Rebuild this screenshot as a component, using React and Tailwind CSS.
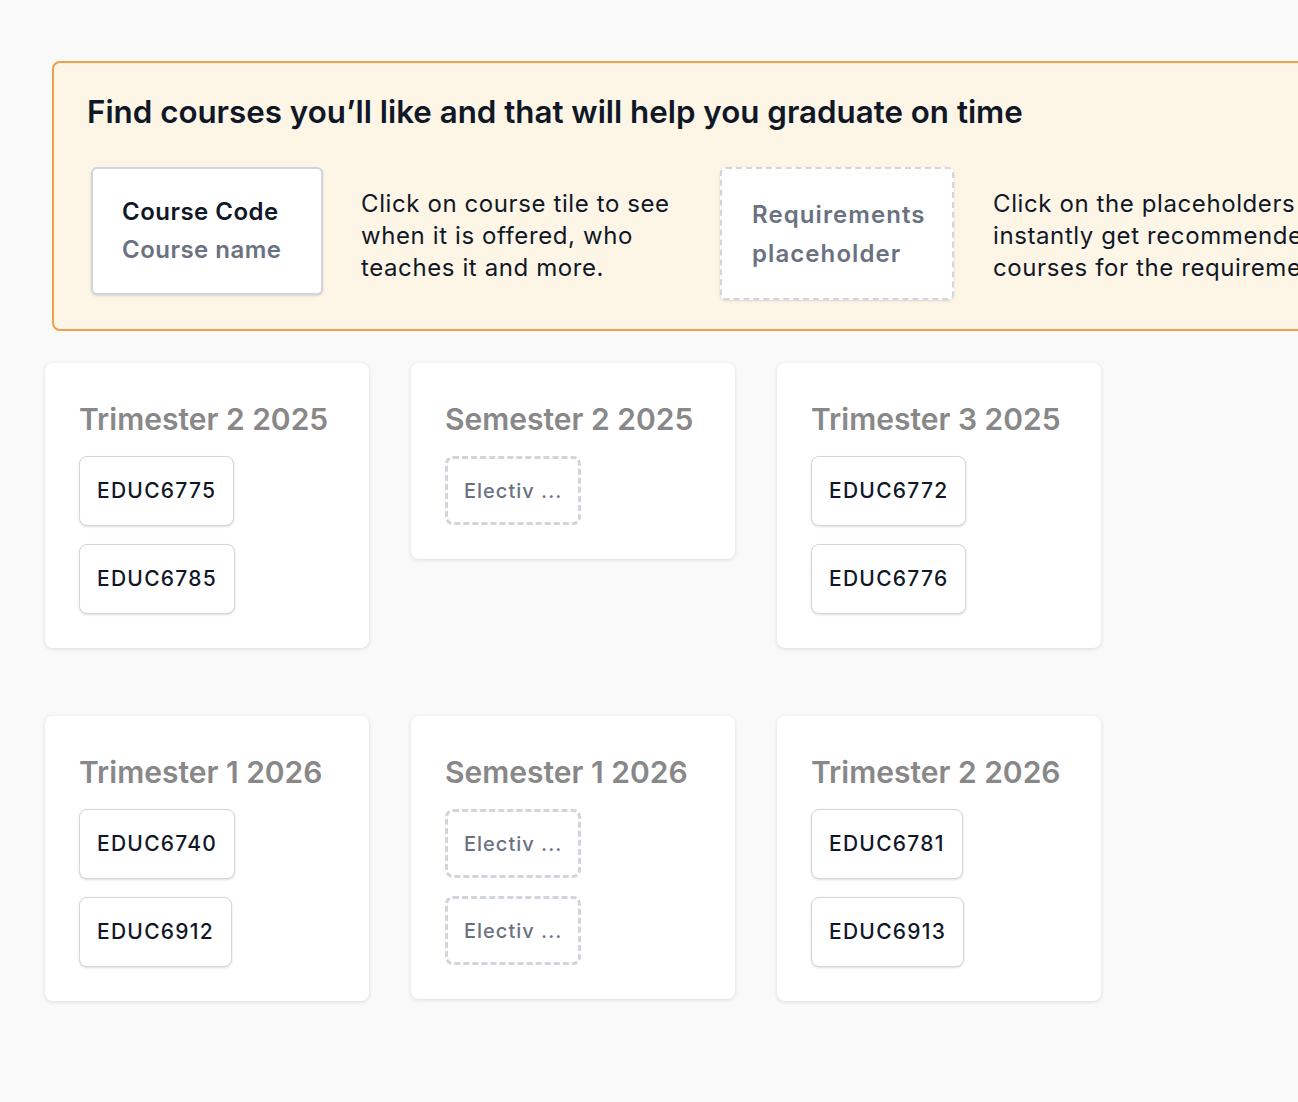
import { Fragment } from "react";

const terms = [
  { name: "Trimester 2 2025", items: ["EDUC6775", "EDUC6785"] },
  { name: "Semester 2 2025", items: [null] },
  { name: "Trimester 3 2025", items: ["EDUC6772", "EDUC6776"] },
  { name: "Trimester 1 2026", items: ["EDUC6740", "EDUC6912"] },
  { name: "Semester 1 2026", items: [null, null] },
  { name: "Trimester 2 2026", items: ["EDUC6781", "EDUC6913"] },
];

function CourseTile({ code }) {
  if (!code) {
    return (
      <div className="w-[136px] h-[69px] flex items-center pl-[16px] rounded-lg border-[3px] border-dashed border-gray-300 bg-white text-[20px] font-medium tracking-[0.05em] text-gray-500">
        Electiv ...
      </div>
    );
  }
  return (
    <div className="self-start h-[70px] flex items-center px-[17px] rounded-lg border border-gray-300 bg-white shadow-sm text-[21px] font-medium tracking-[0.06em] text-gray-900">
      {code}
    </div>
  );
}

export default function App() {
  return (
    <div
      className="min-h-screen bg-[#f9f9f9] overflow-hidden pt-[61px] pb-16"
      style={{ fontFamily: "Inter, 'Noto Sans', sans-serif" }}
    >
      {/* Intro banner */}
      <div className="ml-[52px] w-[1400px] rounded-lg border-2 border-[#f0a04b] bg-[#fdf5e6] pl-[33px] pt-[31px] pb-[29px]">
        <h1 className="text-[31.3px] leading-9 font-semibold text-gray-900">
          Find courses you’ll like and that will help you graduate on time
        </h1>
        <div className="mt-[37px] ml-[4px] flex items-start">
          <div className="w-[232px] h-[128px] shrink-0 flex flex-col justify-center px-[29px] rounded-md border-2 border-gray-300 bg-white shadow-sm">
            <div className="text-[24px] leading-[38px] tracking-[0.02em] font-semibold text-gray-900">Course Code</div>
            <div className="text-[24px] leading-[38px] tracking-[0.02em] font-semibold text-gray-500">Course name</div>
          </div>
          <p className="ml-[38px] w-[322px] shrink-0 pt-[21px] text-[24px] leading-8 tracking-[0.025em] text-gray-900">
            Click on course tile to see
            <br />
            when it is offered, who
            <br />
            teaches it and more.
          </p>
          <div className="ml-[37px] w-[234px] h-[133px] shrink-0 flex flex-col justify-center px-[30px] rounded-md border-2 border-dashed border-gray-300 bg-white shadow-sm">
            <div className="text-[24px] leading-[39px] tracking-[0.045em] font-semibold text-gray-500">Requirements</div>
            <div className="text-[24px] leading-[39px] tracking-[0.045em] font-semibold text-gray-500">placeholder</div>
          </div>
          <p className="ml-[39px] w-[400px] shrink-0 whitespace-nowrap pt-[21px] text-[24px] leading-8 tracking-[0.025em] text-gray-900">
            Click on the placeholders to
            <br />
            instantly get recommended
            <br />
            courses for the requirements.
          </p>
        </div>
      </div>

      {/* Term cards */}
      <div className="ml-[45px] mt-[32px] grid grid-cols-[324px_324px_324px] gap-x-[42px] gap-y-[68px] items-start">
        {terms.map((t) => (
          <div
            key={t.name}
            className="rounded-lg bg-white shadow-[0_1px_4px_rgba(0,0,0,0.12)] px-[34px] pt-[38px] pb-[34px]"
          >
            <h2 className="text-[30px] leading-9 font-semibold text-[#888888]">{t.name}</h2>
            <div className="mt-[19px] flex flex-col gap-[18px]">
              {t.items.map((c, i) => (
                <Fragment key={i}>
                  <CourseTile code={c} />
                </Fragment>
              ))}
            </div>
          </div>
        ))}
      </div>
    </div>
  );
}
